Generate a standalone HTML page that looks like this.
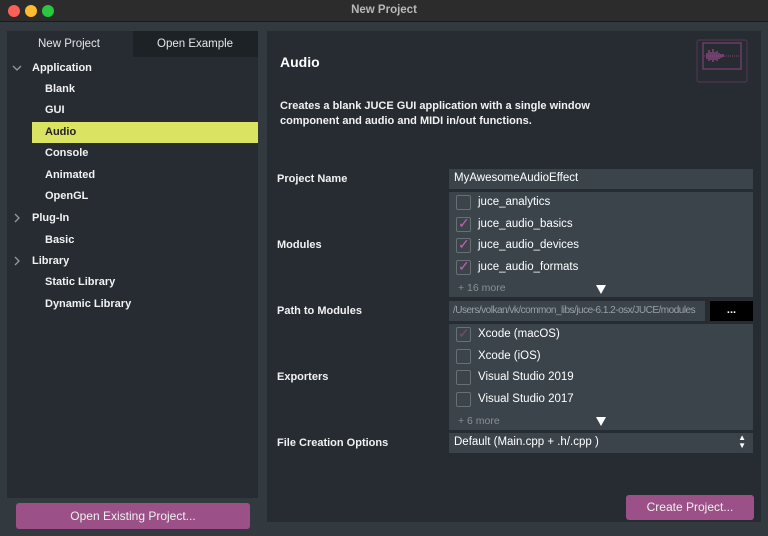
<!DOCTYPE html><html><head><style>
*{box-sizing:border-box;margin:0;padding:0}
body{width:768px;height:536px;background:#323a40;font-family:"Liberation Sans",sans-serif;font-size:11px;color:#fff;position:relative;overflow:hidden}
.a{position:absolute}
.tb{left:0;top:0;width:768px;height:22px;background:#2c2c2c;border-bottom:1px solid #1a1a1a;text-align:center;line-height:21px;color:#b8b8b8;font-weight:bold;font-size:11.5px}
.dot{top:5px;width:12px;height:12px;border-radius:50%}
.lp{left:7px;top:31px;width:251px;height:467px;background:#262c32}
.rp{left:267px;top:31px;width:494px;height:491px;background:#262c32}
.t{font-weight:bold;font-size:11px;color:#f2f2f2}
.f{background:#3b444b;left:449px;width:304px}
.cb{width:15px;height:15px;border:1px solid #6a6f74;border-radius:2px;left:7px}
.row{height:21.5px;position:relative}
.row span{position:absolute;left:29px;top:4px;font-size:11.5px}
.ck{position:absolute;left:9px;top:-1px;color:#c65fb0;font-size:14px}
.more{color:#8a9096;font-size:10.5px;position:absolute;left:9px}
.tri{position:absolute;left:147px;width:0;height:0;border-left:5px solid transparent;border-right:5px solid transparent;border-top:9px solid #fff}
.btn{background:#9b5087;border-radius:3px;text-align:center;font-size:12px;color:#f0f0f0}
</style></head><body>
<div class="a tb">New Project</div>
<div class="a dot" style="left:8px;background:#fe5f57"></div>
<div class="a dot" style="left:25px;background:#febc2e"></div>
<div class="a dot" style="left:42px;background:#28c840"></div>

<div class="a lp">
<div class="a" style="left:126px;top:0;width:125px;height:26px;background:#1d2226"></div>
<div class="a" style="left:31px;top:7px;color:#e6e6e6;font-size:11.5px">New Project</div>
<div class="a" style="left:150px;top:7px;color:#e6e6e6;font-size:11.5px">Open Example</div>
<div class="a" style="left:25px;top:91px;width:226px;height:21px;background:#dbe363"></div>
<svg class="a" style="left:5px;top:33px" width="10" height="8"><path d="M1 2l4 4 4-4" stroke="#999" fill="none" stroke-width="1.3"/></svg>
<div class="a t" style="left:25px;top:31px">Application</div>
<div class="a t" style="left:38px;top:52px">Blank</div>
<div class="a t" style="left:38px;top:73px">GUI</div>
<div class="a t" style="left:38px;top:95px;color:#222">Audio</div>
<div class="a t" style="left:38px;top:116px">Console</div>
<div class="a t" style="left:38px;top:138px">Animated</div>
<div class="a t" style="left:38px;top:159px">OpenGL</div>
<svg class="a" style="left:6px;top:182px" width="8" height="10"><path d="M2 1l4 4-4 4" stroke="#999" fill="none" stroke-width="1.3"/></svg>
<div class="a t" style="left:25px;top:181px">Plug-In</div>
<div class="a t" style="left:38px;top:203px">Basic</div>
<svg class="a" style="left:6px;top:225px" width="8" height="10"><path d="M2 1l4 4-4 4" stroke="#999" fill="none" stroke-width="1.3"/></svg>
<div class="a t" style="left:25px;top:224px">Library</div>
<div class="a t" style="left:38px;top:245px">Static Library</div>
<div class="a t" style="left:38px;top:267px">Dynamic Library</div>
</div>
<div class="a btn" style="left:16px;top:503px;width:234px;height:26px;line-height:26px">Open Existing Project...</div>

<div class="a rp">
<div class="a" style="left:13px;top:23px;font-size:14px;font-weight:bold">Audio</div>
<div class="a t" style="left:13px;top:68px;line-height:15px;font-size:11px">Creates a blank JUCE GUI application with a single window<br>component and audio and MIDI in/out functions.</div>
<div class="a t" style="left:10px;top:142px">Project Name</div>
<div class="a t" style="left:10px;top:208px">Modules</div>
<div class="a t" style="left:10px;top:274px">Path to Modules</div>
<div class="a t" style="left:10px;top:340px">Exporters</div>
<div class="a t" style="left:10px;top:406px">File Creation Options</div>
</div>
<svg class="a" style="left:696px;top:39px" width="52" height="44"><rect x="1" y="1" width="50" height="42" rx="2" fill="none" stroke="#4f3550" stroke-width="1.2"/><rect x="7" y="4" width="38" height="26" fill="none" stroke="#6a3d66" stroke-width="1.5"/><line x1="8" y1="17" x2="44" y2="17" stroke="#7d4575" stroke-dasharray="1 1"/><path d="M11 17v-3M13 17v-6M15 17v-4M17 17v-7M19 17v-4M21 17v-5M23 17v-3M25 17v-2M27 17v-2M11 17v3M13 17v5M15 17v4M17 17v6M19 17v4M21 17v5M23 17v3M25 17v2M27 17v1" stroke="#8e4a85" stroke-width="1.3"/></svg>

<div class="a f" style="top:169px;height:20px;padding:3px 5px;font-size:11.5px">MyAwesomeAudioEffect</div>
<div class="a f" style="top:192px;height:105px;padding-top:0">
<div class="row"><div class="a cb" style="top:3px"></div><span>juce_analytics</span></div>
<div class="row"><div class="a cb" style="top:3px"></div><div class="ck" style="top:1px">✓</div><span>juce_audio_basics</span></div>
<div class="row"><div class="a cb" style="top:3px"></div><div class="ck" style="top:1px">✓</div><span>juce_audio_devices</span></div>
<div class="row"><div class="a cb" style="top:3px"></div><div class="ck" style="top:1px">✓</div><span>juce_audio_formats</span></div>
<div class="more" style="top:90px">+ 16 more</div><div class="tri" style="top:93px"></div>
</div>
<div class="a" style="left:449px;top:301px;width:256px;height:20px;background:#3b444b;color:#9aa0a5;font-size:10px;padding:4px 4px;white-space:nowrap;overflow:hidden;letter-spacing:-0.5px">/Users/volkan/vk/common_libs/juce-6.1.2-osx/JUCE/modules</div>
<div class="a" style="left:710px;top:301px;width:43px;height:20px;background:#000;text-align:center;font-weight:bold;line-height:18px">...</div>
<div class="a f" style="top:324px;height:106px">
<div class="row"><div class="a cb" style="top:3px"></div><div class="ck" style="top:1px;color:#7a4a72">✓</div><span>Xcode (macOS)</span></div>
<div class="row"><div class="a cb" style="top:3px"></div><span>Xcode (iOS)</span></div>
<div class="row"><div class="a cb" style="top:3px"></div><span>Visual Studio 2019</span></div>
<div class="row"><div class="a cb" style="top:3px"></div><span>Visual Studio 2017</span></div>
<div class="more" style="top:91px">+ 6 more</div><div class="tri" style="top:93px"></div>
</div>
<div class="a f" style="top:433px;height:20px;padding:3px 5px;font-size:11.5px">Default (Main.cpp + .h/.cpp )<span style="position:absolute;right:7px;top:1px;font-size:8px;line-height:8px">▲<br>▼</span></div>
<div class="a btn" style="left:626px;top:495px;width:128px;height:25px;line-height:25px">Create Project...</div>
</body></html>
